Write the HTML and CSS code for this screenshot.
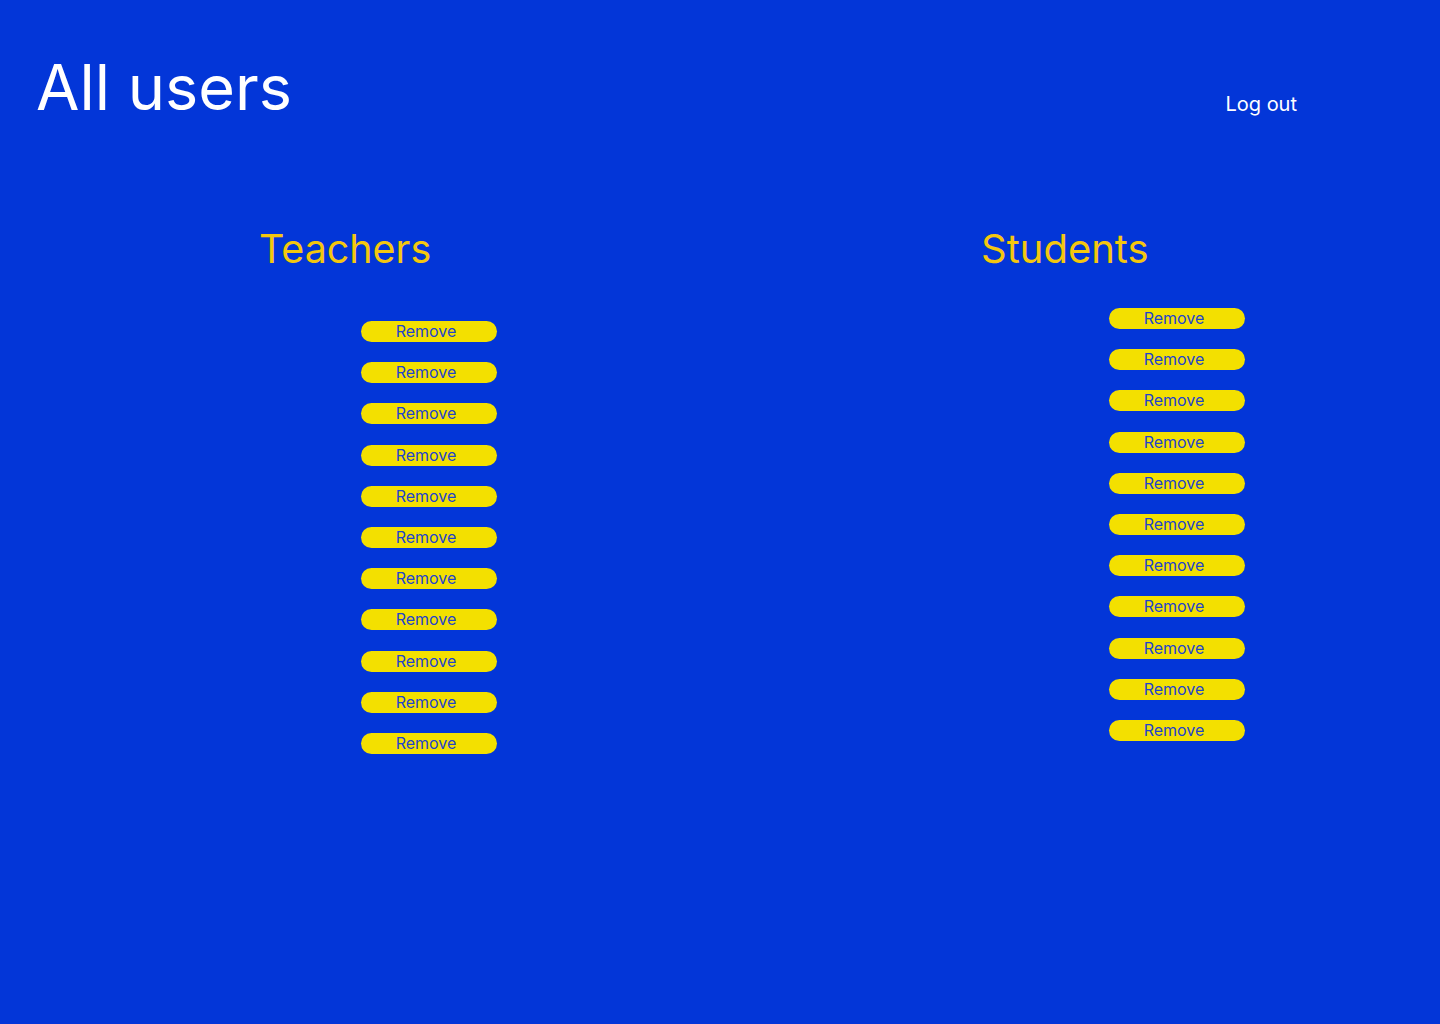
FILE: index.html
```html
<!DOCTYPE html>
<html lang="en">
<head>
<meta charset="utf-8">
<title>All users</title>
<link rel="stylesheet" href="styles.css">
</head>
<body>
<header class="top">
  <h1 class="title">All users</h1>
  <a class="logout" href="#">Log out</a>
</header>
<main class="columns">
  <section class="col col-teachers">
    <h2 class="col-title">Teachers</h2>
    <ul class="list">
      <li><button class="remove">Remove</button></li>
      <li><button class="remove">Remove</button></li>
      <li><button class="remove">Remove</button></li>
      <li><button class="remove">Remove</button></li>
      <li><button class="remove">Remove</button></li>
      <li><button class="remove">Remove</button></li>
      <li><button class="remove">Remove</button></li>
      <li><button class="remove">Remove</button></li>
      <li><button class="remove">Remove</button></li>
      <li><button class="remove">Remove</button></li>
      <li><button class="remove">Remove</button></li>
    </ul>
  </section>
  <section class="col col-students">
    <h2 class="col-title">Students</h2>
    <ul class="list">
      <li><button class="remove">Remove</button></li>
      <li><button class="remove">Remove</button></li>
      <li><button class="remove">Remove</button></li>
      <li><button class="remove">Remove</button></li>
      <li><button class="remove">Remove</button></li>
      <li><button class="remove">Remove</button></li>
      <li><button class="remove">Remove</button></li>
      <li><button class="remove">Remove</button></li>
      <li><button class="remove">Remove</button></li>
      <li><button class="remove">Remove</button></li>
      <li><button class="remove">Remove</button></li>
    </ul>
  </section>
</main>
</body>
</html>
```
FILE: styles.css
```css
html, body {
  margin: 0;
  padding: 0;
}
body {
  background: #0336d8;
  min-height: 1024px;
  font-family: Inter, "Noto Sans", sans-serif;
  color: #ffffff;
}
.top {
  display: flex;
  justify-content: space-between;
  align-items: flex-start;
  padding: 0 143px 0 36px;
}
.title {
  margin: 49px 0 0 0;
  font-size: 63px;
  font-weight: 400;
  line-height: 77px;
  letter-spacing: 0;
}
.logout {
  margin-top: 92px;
  color: #ffffff;
  text-decoration: none;
  font-size: 20px;
  line-height: 24px;
}
.columns {
  display: grid;
  grid-template-columns: 720px 720px;
  margin-top: 99px;
}
.col-title {
  margin: 0;
  font-size: 39.4px;
  font-weight: 400;
  line-height: 48px;
  color: #f4c70e;
}
.col-teachers .col-title {
  padding-left: 259px;
}
.col-students .col-title {
  padding-left: 261px;
  font-size: 40px;
}
.list {
  list-style: none;
  margin: 0;
  padding: 0;
  display: flex;
  flex-direction: column;
  gap: 20.2px;
}
.col-teachers .list {
  margin-top: 48px;
  padding-left: 361px;
}
.col-students .list {
  margin-top: 35px;
  padding-left: 389px;
}
.remove {
  display: block;
  width: 136px;
  height: 21px;
  padding: 0 6px 0 0;
  border: none;
  border-radius: 11px;
  background: #f3e000;
  color: #1f44cc;
  font-family: Inter, "Noto Sans", sans-serif;
  font-size: 16px;
  line-height: 21px;
  text-align: center;
  cursor: pointer;
}
```
